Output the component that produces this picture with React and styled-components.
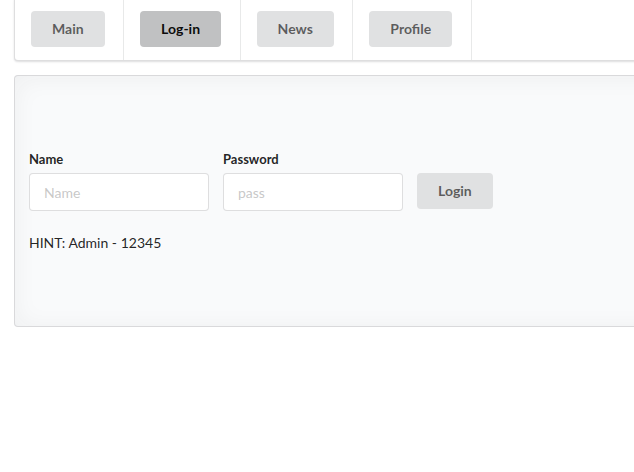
import React from 'react';
import styled, { createGlobalStyle } from 'styled-components';

const Global = createGlobalStyle`
  html, body {
    margin: 0;
    padding: 0;
    background: #fff;
    overflow: hidden;
  }
  body {
    font-family: Lato, "Helvetica Neue", Arial, sans-serif;
    font-size: 14px;
    line-height: 1.4285em;
    color: rgba(0, 0, 0, 0.87);
  }
  * {
    box-sizing: border-box;
  }
`;

const tabs = ['Main', 'Log-in', 'News', 'Profile'];

function App() {
  return (
    <Page>
      <Global />
      <Menu>
        {tabs.map((t) => (
          <Item key={t}>
            <Button active={t === 'Log-in'}>{t}</Button>
          </Item>
        ))}
      </Menu>
      <Segment>
        <Form>
          <Fields>
            <Field>
              <Label>Name</Label>
              <Input placeholder="Name" />
            </Field>
            <Field>
              <Label>Password</Label>
              <Input type="password" placeholder="pass" />
            </Field>
            <Field>
              <Label aria-hidden="true">&nbsp;</Label>
              <Button>Login</Button>
            </Field>
          </Fields>
          <Hint>HINT: Admin - 12345</Hint>
        </Form>
      </Segment>
    </Page>
  );
}
export default App;

const Page = styled.div`
  width: 660px;
  margin: -3px 0 0 14px;
`;

const Menu = styled.div`
  display: flex;
  background: #fff;
  border: 1px solid rgba(34, 36, 38, 0.15);
  border-radius: 4px;
  box-shadow: 0 1px 2px 0 rgba(34, 36, 38, 0.15);
  margin: 0 0 14px;
`;

const Item = styled.div`
  padding: 13px 15px 13px 16px;
  border-right: 1px solid rgba(34, 36, 38, 0.1);
`;

const Button = styled.button`
  display: inline-block;
  font-family: Lato, "Helvetica Neue", Arial, sans-serif;
  font-size: 14px;
  font-weight: 700;
  line-height: 1em;
  padding: 11px 21px;
  margin: 0 3.5px 0 0;
  border: none;
  border-radius: 4px;
  cursor: pointer;
  background: ${(p) => (p.active ? '#c0c1c2' : '#e0e1e2')};
  color: ${(p) => (p.active ? 'rgba(0, 0, 0, 0.95)' : 'rgba(0, 0, 0, 0.6)')};
`;

const Segment = styled.div`
  display: flex;
  flex-direction: column;
  justify-content: center;
  min-height: 252px;
  padding: 14px;
  background: #f9fafb;
  border: 1px solid rgba(34, 36, 38, 0.15);
  border-radius: 4px;
  box-shadow: 0 2px 25px 0 rgba(34, 36, 38, 0.05) inset;
`;

const Form = styled.form`
  margin: 0;
`;

const Fields = styled.div`
  display: flex;
  gap: 14px;
  align-items: flex-start;
`;

const Field = styled.div`
  display: flex;
  flex-direction: column;
`;

const Label = styled.label`
  display: block;
  font-size: 13px;
  font-weight: 700;
  color: rgba(0, 0, 0, 0.87);
  margin: 0 0 4px;
`;

const Input = styled.input`
  width: 180px;
  font-family: Lato, "Helvetica Neue", Arial, sans-serif;
  font-size: 14px;
  line-height: 17px;
  padding: 9.5px 14px;
  background: #fff;
  border: 1px solid rgba(34, 36, 38, 0.15);
  border-radius: 4px;
  color: rgba(0, 0, 0, 0.87);
  outline: none;
  &::placeholder {
    color: rgba(191, 191, 191, 0.87);
  }
`;

const Hint = styled.div`
  margin-top: 22px;
  font-size: 14px;
  color: rgba(0, 0, 0, 0.87);
`;
